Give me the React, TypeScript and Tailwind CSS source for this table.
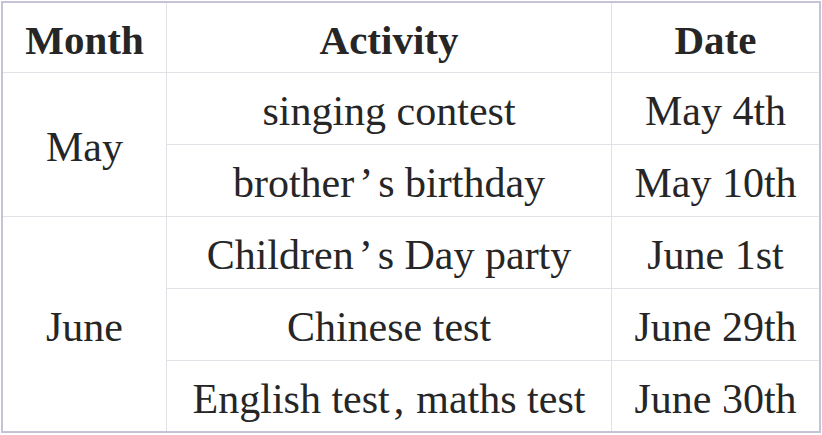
import React from "react";

const line = "border-[#e2e1e7]";

function Cell({
  children,
  className = "",
}: {
  children: React.ReactNode;
  className?: string;
}) {
  return (
    <div
      className={`flex items-center justify-center whitespace-nowrap pt-[6px] ${className}`}
    >
      {children}
    </div>
  );
}

const Apos = () => <span className="mx-[5px]">’</span>;

export default function App() {
  return (
    <div className="w-[822px] h-[435px] bg-white pt-[1px] pl-[1px]">
      <div
        className="w-[820px] h-[432px] border-2 border-[#c6c2d8] grid grid-cols-[164px_445px_1fr] grid-rows-[70px_72px_72px_72px_72px_1fr] text-[#262626] text-[42px]"
        style={{ fontFamily: '"Liberation Serif", "Times New Roman", serif' }}
      >
        <Cell className={`border-r border-b ${line} font-bold text-[41px]`}>Month</Cell>
        <Cell className={`border-r border-b ${line} font-bold text-[41px]`}>Activity</Cell>
        <Cell className={`border-b ${line} font-bold text-[41px]`}>Date</Cell>

        <Cell className={`row-span-2 border-r border-b ${line}`}>May</Cell>
        <Cell className={`border-r border-b ${line}`}>singing contest</Cell>
        <Cell className={`border-b ${line}`}>May 4th</Cell>
        <Cell className={`border-r border-b ${line}`}>
          brother<Apos />s birthday
        </Cell>
        <Cell className={`border-b ${line}`}>May 10th</Cell>

        <Cell className={`row-span-3 border-r ${line}`}>June</Cell>
        <Cell className={`border-r border-b ${line}`}>
          Children<Apos />s Day party
        </Cell>
        <Cell className={`border-b ${line}`}>June 1st</Cell>
        <Cell className={`border-r border-b ${line}`}>Chinese test</Cell>
        <Cell className={`border-b ${line}`}>June 29th</Cell>
        <Cell className={`border-r ${line}`}>
          English test<span className="ml-[4px] mr-[12px]">,</span>maths test
        </Cell>
        <Cell>June 30th</Cell>
      </div>
    </div>
  );
}
